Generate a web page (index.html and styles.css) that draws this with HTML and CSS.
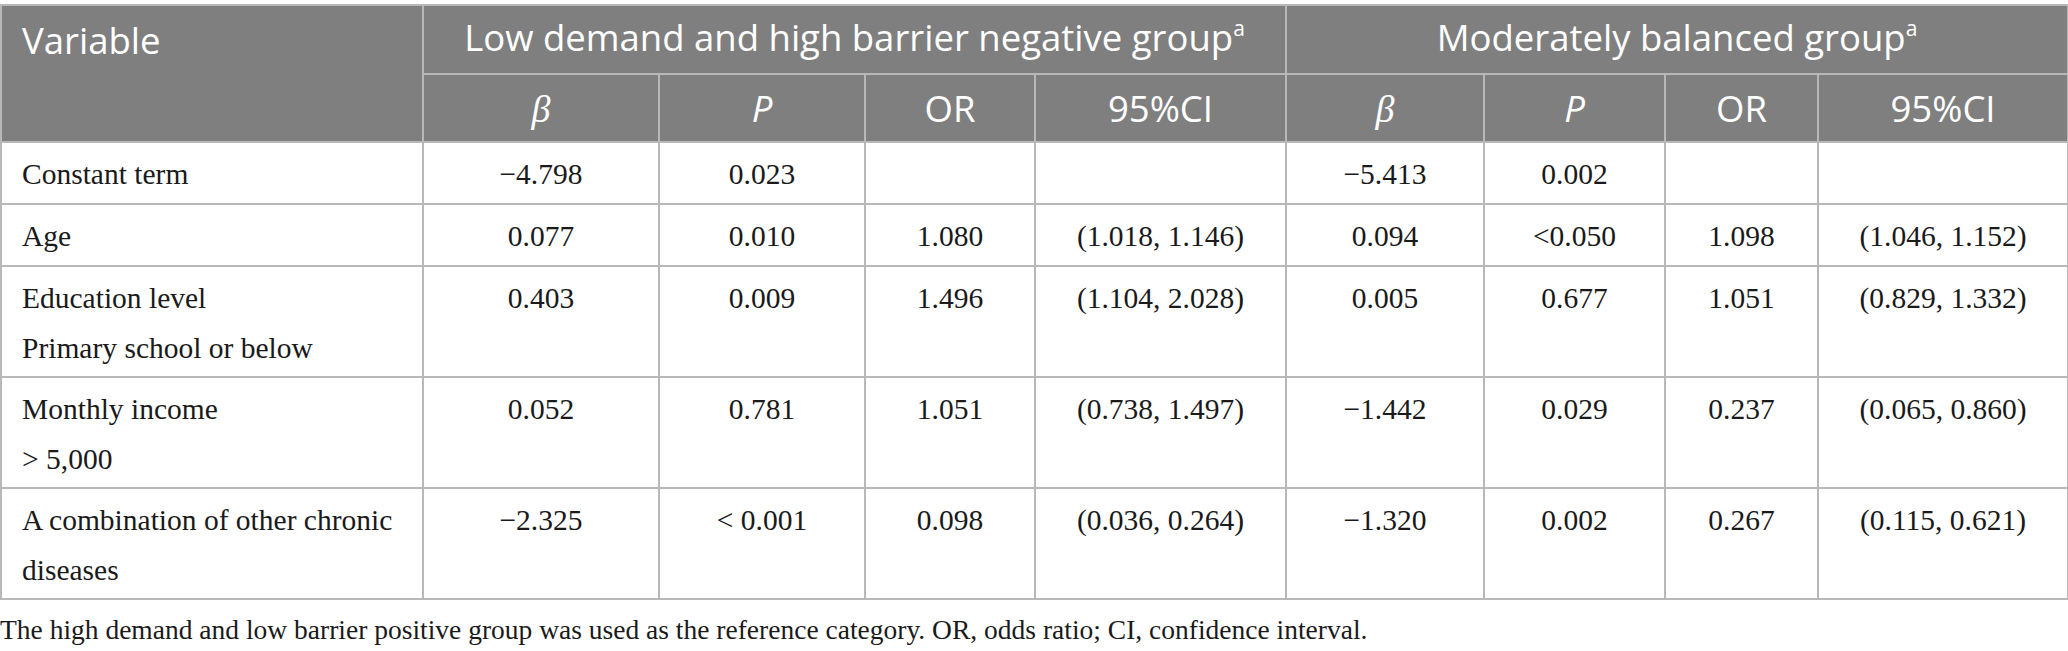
FILE: index.html
```html
<!DOCTYPE html>
<html>
<head>
<meta charset="utf-8">
<link rel="stylesheet" href="styles.css">
</head>
<body>
<div class="wrap">
<table class="data">
  <colgroup>
    <col class="c-var"><col class="c1"><col class="c2"><col class="c3"><col class="c4"><col class="c5"><col class="c6"><col class="c7"><col class="c8">
  </colgroup>
  <thead>
    <tr class="h1">
      <th class="left" rowspan="2">Variable</th>
      <th colspan="4">Low demand and high barrier negative group<sup>a</sup></th>
      <th colspan="4">Moderately balanced group<sup>a</sup></th>
    </tr>
    <tr class="h2">
      <th><span class="beta">β</span></th><th><i>P</i></th><th>OR</th><th>95%CI</th>
      <th><span class="beta">β</span></th><th><i>P</i></th><th>OR</th><th>95%CI</th>
    </tr>
  </thead>
  <tbody>
    <tr class="r1">
      <td class="left">Constant term</td><td>−4.798</td><td>0.023</td><td></td><td></td><td>−5.413</td><td>0.002</td><td></td><td></td>
    </tr>
    <tr class="r1">
      <td class="left">Age</td><td>0.077</td><td>0.010</td><td>1.080</td><td>(1.018, 1.146)</td><td>0.094</td><td>&lt;0.050</td><td>1.098</td><td>(1.046, 1.152)</td>
    </tr>
    <tr class="r2">
      <td class="left">Education level<br>Primary school or below</td><td>0.403</td><td>0.009</td><td>1.496</td><td>(1.104, 2.028)</td><td>0.005</td><td>0.677</td><td>1.051</td><td>(0.829, 1.332)</td>
    </tr>
    <tr class="r2">
      <td class="left">Monthly income<br>&gt; 5,000</td><td>0.052</td><td>0.781</td><td>1.051</td><td>(0.738, 1.497)</td><td>−1.442</td><td>0.029</td><td>0.237</td><td>(0.065, 0.860)</td>
    </tr>
    <tr class="r2">
      <td class="left">A combination of other chronic diseases</td><td>−2.325</td><td>&lt; 0.001</td><td>0.098</td><td>(0.036, 0.264)</td><td>−1.320</td><td>0.002</td><td>0.267</td><td>(0.115, 0.621)</td>
    </tr>
  </tbody>
</table>
<p class="note">The high demand and low barrier positive group was used as the reference category. OR, odds ratio; CI, confidence interval.</p>
</div>
</body>
</html>
```
FILE: styles.css
```css
html, body {
  margin: 0;
  padding: 0;
  background: #ffffff;
}
.wrap {
  padding-top: 4px;
}
.data {
  border-collapse: collapse;
  table-layout: fixed;
  width: 2067px;
}
.c-var { width: 422px; }
.c1 { width: 236px; }
.c2 { width: 206px; }
.c3 { width: 170px; }
.c4 { width: 251px; }
.c5 { width: 198px; }
.c6 { width: 181px; }
.c7 { width: 153px; }
.c8 { width: 250px; }

.data th, .data td {
  border: 2px solid #b8b8b8;
}
.data th {
  background: #7f7f7f;
  color: #ffffff;
  font-family: "Open Sans", "Noto Sans", sans-serif;
  font-weight: 400;
  font-size: 36.5px;
  text-align: center;
  padding: 0;
  line-height: 40px;
}
.data th sup {
  font-size: 21px;
  vertical-align: 0;
  position: relative;
  top: -15px;
}
.data th.left {
  text-align: left;
  padding-left: 20px;
  vertical-align: top;
  padding-top: 14px;
}
.h1 th { height: 67px; }
.h2 th { height: 66px; }
.data th i { font-style: italic; }
.beta {
  font-family: "Liberation Serif", "DejaVu Serif", serif;
  font-style: italic;
  font-size: 38px;
}
.data td {
  font-family: "Liberation Serif", "Times New Roman", serif;
  font-size: 29.5px;
  color: #1a1a1a;
  text-align: center;
  vertical-align: top;
  line-height: 50px;
  padding: 6px 12px 0 12px;
}
.data td.left {
  text-align: left;
  padding-left: 20px;
}
.r1 td { height: 54px; }
.r2 td { height: 103px; }
.note {
  margin: 10px 0 0 0;
  font-family: "Liberation Serif", "Times New Roman", serif;
  font-size: 27.5px;
  line-height: 40px;
  color: #1a1a1a;
}
```
